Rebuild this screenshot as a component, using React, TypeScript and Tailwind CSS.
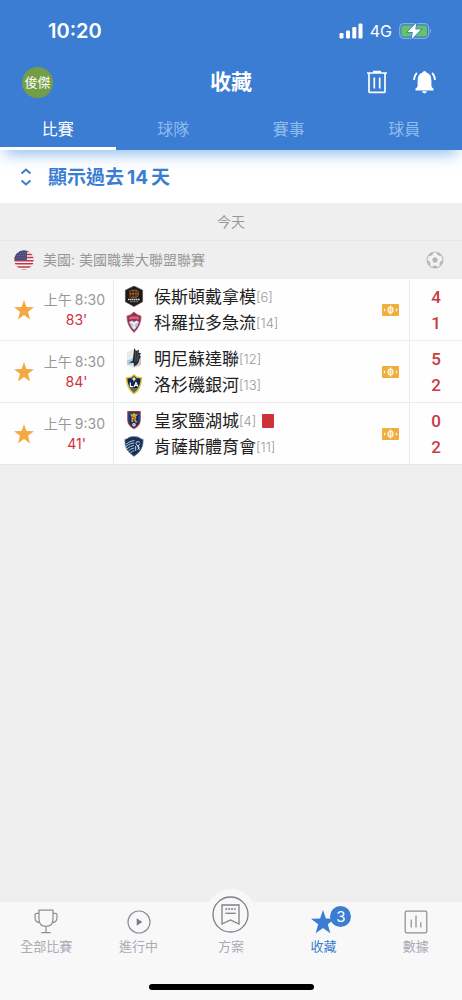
import type { ReactNode } from "react";

type Crest = "houston" | "colorado" | "minnesota" | "galaxy" | "saltlake" | "kansas";

interface Team {
  name: string;
  rank: number;
  crest: Crest;
  score: number;
  redCard?: boolean;
}

interface Match {
  time: string;
  minute: number;
  teams: Team[];
}

const matches: Match[] = [
  {
    time: "8:30",
    minute: 83,
    teams: [
      { name: "侯斯頓戴拿模", rank: 6, crest: "houston", score: 4 },
      { name: "科羅拉多急流", rank: 14, crest: "colorado", score: 1 },
    ],
  },
  {
    time: "8:30",
    minute: 84,
    teams: [
      { name: "明尼蘇達聯", rank: 12, crest: "minnesota", score: 5 },
      { name: "洛杉磯銀河", rank: 13, crest: "galaxy", score: 2 },
    ],
  },
  {
    time: "9:30",
    minute: 41,
    teams: [
      { name: "皇家鹽湖城", rank: 4, crest: "saltlake", score: 0, redCard: true },
      { name: "肯薩斯體育會", rank: 11, crest: "kansas", score: 2 },
    ],
  },
];

const crestArt: Record<Crest, ReactNode> = {
  houston: (
    <>
      <path d="M10 0 L18.6 4.2 V15.8 L10 20.5 L1.4 15.8 V4.2 Z" fill="#1c1b1c" stroke="#5b4037" strokeWidth=".6" />
      <path d="M6 4.3 V11.3 M6 7.8 H14 M9 4.3 V11.3 M7 4.3 H12.5 Q14.8 4.6 14.5 7.8 Q14.4 11 12 11.3 H7 M12 4.3 V11.3" fill="none" stroke="#b9642e" strokeWidth=".9" />
      <path d="M4 13.4 H16" stroke="#d8d4d1" strokeWidth="1.5" strokeDasharray="1.5 .4" />
      <path d="M6 15.7 H14" stroke="#a8a3a1" strokeWidth=".9" strokeDasharray="1 .4" />
    </>
  ),
  colorado: (
    <>
      <path d="M10 0 Q12.5 3 17 4 Q17.5 13 10 20.5 Q2.5 13 3 4 Q7.5 3 10 0 Z" fill="#9a2c48" stroke="#b65d78" strokeWidth=".8" />
      <path d="M5 5.2 Q10 3 15 5.2 V8 Q10 6 5 8 Z" fill="#c3516b" />
      <path d="M5 9.7 L8 8.6 L10 9.8 L12.4 8.4 L15.2 10 Q14.2 14.5 10 18.3 Q6 14.5 5 9.7 Z" fill="#a9c4dc" />
      <path d="M5.4 10.4 L8 9 L10 11 L12.4 8.8 L14.6 10.2 L12 11.8 L10 14 L8 11.6 Z" fill="#f0eef2" />
      <circle cx="10" cy="15.3" r="1.8" fill="#dfe8ef" />
      <path d="M5.7 5.9 H14.3" stroke="#e8b0bf" strokeWidth=".8" strokeDasharray="1 .5" />
    </>
  ),
  minnesota: (
    <>
      <path d="M3 4 L10 1 L17 4 V17 L10 20.5 L3 17 Z" fill="#e9eaeb" />
      <path d="M3.2 12 Q8 12 9 9 L10 13 L7.5 16.5 L3.2 17 Z" fill="#9cd0e7" />
      <path d="M13 13 L17 10.5 V16.8 L12 19 Z" fill="#c3c7ca" />
      <path d="M10.2 0 L12 3 L15 1.8 L14.7 5 L16.8 5 L15.7 8 L17 8.6 L15.2 12 Q14.6 16 11 18 L10 19 L9.6 15 L5 14.6 L8.7 12.8 Z" fill="#282c33" />
      <path d="M11.3 3 L11.8 14 M13.4 3 L13 13 M15 6 L13.5 13" stroke="#6f767d" strokeWidth=".4" />
    </>
  ),
  galaxy: (
    <>
      <path d="M10 0 L13 2.6 L18.4 3.2 Q17.8 15.5 10 20.5 Q2.2 15.5 1.6 3.2 L7 2.6 Z" fill="#e0c33f" />
      <path d="M10 1.6 L12.5 4 L16.7 4.5 Q16.1 14.3 10 18.7 Q3.9 14.3 3.3 4.5 L7.5 4 Z" fill="#10274d" />
      <path d="M10 1.8 L10.8 4.2 L12.6 5 L10.8 5.8 L10 8 L9.2 5.8 L7.4 5 L9.2 4.2 Z" fill="#fff2a6" />
      <path d="M6.3 8.5 V12.7 H9.3 M10.2 12.8 L12 8.6 L14 12.8 M10.8 11.5 H13.3" fill="none" stroke="#fff" strokeWidth="1.2" />
      <path d="M5.8 15 H14.2 M8 17 H12" stroke="#d0b33a" strokeWidth=".9" />
    </>
  ),
  saltlake: (
    <>
      <path d="M3.9 1.6 H16.1 V10 Q16.1 15.2 10 18.6 Q3.9 15.2 3.9 10 Z" fill="#152c5c" stroke="#9f3848" strokeWidth="1.2" />
      <path d="M5.1 3 V12 M14.9 3 V12" stroke="#1f4a87" strokeWidth="1.2" />
      <path d="M6.3 3 L8.3 4.5 L10 2.5 L12 4.5 L13.8 3 L13 6 H7 Z M7.5 6 V12.2 H9.2 V9 L11.5 12.4 H13.5 L11.4 9 Q13.5 7.3 11.4 6 Z" fill="#c9ac38" />
      <path d="M8 6.7 L11 8.4 L8.8 10" fill="none" stroke="#ae3045" strokeWidth=".9" />
      <circle cx="10" cy="14.7" r="1.8" fill="#e6e9f0" />
      <circle cx="10" cy="14.7" r=".6" fill="#59729e" />
    </>
  ),
  kansas: (
    <>
      <path d="M.8 3.4 Q3.5 2.8 5.2 1.2 Q10 -.6 14.8 1.2 Q16.5 2.8 19.2 3.4 Q20 14.5 10 20.5 Q0 14.5 .8 3.4 Z" fill="#182f57" stroke="#8aa3bd" strokeWidth=".7" />
      <path d="M2 8.2 Q5.5 5 10.4 4.5 M1.9 10.6 Q5.5 7.3 10.3 6.9 M2.7 13 Q6 9.8 10.2 9.4 M4.2 15.2 Q7 12.3 10.2 12 M6.2 17.1 Q8 15 10.2 14.6" fill="none" stroke="#a9c9e5" strokeWidth="1" />
      <path d="M15.8 6.2 Q11.8 4.7 12 7.6 Q12.3 9.2 14.3 10 Q16.5 12.2 13.5 13.3 M11.7 10 V14.8 M16.2 8 L13.7 10.4 L15.6 14" fill="none" stroke="#e8eef5" strokeWidth=".9" />
    </>
  ),
};

function StarIcon({ className }: { className: string }) {
  return (
    <svg viewBox="0 0 20 20" className={className} fill="currentColor" aria-hidden="true">
      <path d="M10 0 L12.4 7 L20 7.2 L14 11.8 L16.1 19.4 L10 15 L3.9 19.4 L6 11.8 L0 7.2 L7.6 7 Z" />
    </svg>
  );
}

function StatusBar() {
  return (
    <div className="flex h-[62px] items-center justify-between pr-[30px] pl-12">
      <span className="text-[20px] font-semibold">10:20</span>
      <div className="flex items-center gap-[7px]">
        <svg className="h-4 w-6" viewBox="0 0 24 16" fill="#fff" aria-hidden="true">
          <rect x="0.5" y="10" width="4" height="5.5" rx="1.2" />
          <rect x="7" y="7.5" width="4" height="8" rx="1.2" />
          <rect x="13.3" y="4" width="4" height="11.5" rx="1.2" />
          <rect x="19.5" y="0.5" width="4" height="15" rx="1.2" />
        </svg>
        <span className="text-[16px]">4G</span>
        <svg className="h-4 w-[33px]" viewBox="0 0 33 16" aria-hidden="true">
          <rect x=".7" y=".7" width="29" height="14.6" rx="4.2" fill="none" stroke="#86aee3" strokeWidth="1.2" />
          <rect x="2.4" y="2.4" width="25.6" height="11.2" rx="2.6" fill="#64c466" />
          <path d="M31 5.5 Q33 8 31 10.5 Z" fill="#86aee3" />
          <path d="M17.3 0 L8.5 9 H13.8 L12.7 16 L22 6.6 H16.3 Z" fill="#fff" stroke="#3a7dd2" strokeWidth="1.6" paintOrder="stroke" />
        </svg>
      </div>
    </div>
  );
}

function Header() {
  const tabs = ["比賽", "球隊", "賽事", "球員"];
  return (
    <header className="relative z-10 bg-[#3a7dd2] text-white shadow-[0_9px_14px_-5px_rgba(70,145,225,0.6)]">
      <StatusBar />
      <div className="grid h-10 grid-cols-[1fr_auto_1fr] items-center px-[22px]">
        <button className="size-[31px] rounded-full bg-[#739e47] text-[13px] leading-none">俊傑</button>
        <h1 className="text-[21px] leading-8 font-bold">收藏</h1>
        <div className="flex items-center gap-[25px] justify-self-end pr-1">
          <button aria-label="刪除">
            <svg className="h-6 w-[22px]" viewBox="0 0 22 24" fill="none" stroke="#fff" strokeWidth="1.7" aria-hidden="true">
              <path d="M1 3 H21 M7 1.7 H15 M3 3 V21.4 Q3 22.4 4 22.4 H18 Q19 22.4 19 21.4 V3 M8.3 7.5 V18.5 M13.7 7.5 V18.5" />
            </svg>
          </button>
          <button aria-label="通知">
            <svg className="h-6 w-[23px]" viewBox="0 0 23 24" aria-hidden="true">
              <path d="M11.5 1 Q13.2 1 13.4 2.6 Q18.4 4.2 18.4 10.3 V16 Q18.6 17.8 20.5 18.6 V20.4 H2.5 V18.6 Q4.4 17.8 4.6 16 V10.3 Q4.6 4.2 9.6 2.6 Q9.8 1 11.5 1 Z M9 21.3 H14 Q13.5 23.4 11.5 23.4 Q9.5 23.4 9 21.3 Z" fill="#fff" />
              <path d="M4 3 Q1.2 5.3 1 10 M19 3 Q21.8 5.3 22 10" fill="none" stroke="#fff" strokeWidth="1.7" />
            </svg>
          </button>
        </div>
      </div>
      <nav className="grid grid-cols-4">
        {tabs.map((tab, i) => (
          <button
            key={tab}
            className={
              i === 0
                ? "h-12 border-b-[3px] border-white pt-2 text-[16px]"
                : "h-12 border-b-[3px] border-transparent pt-2 text-[16px] text-[#8fbcf0]"
            }
          >
            {tab}
          </button>
        ))}
      </nav>
    </header>
  );
}

function MoneyIcon() {
  return (
    <svg className="h-3 w-[17px]" viewBox="0 0 17 12" aria-label="投注">
      <rect width="17" height="12" rx="1" fill="#f1ad3f" />
      <g fill="none" stroke="#fff6df">
        <ellipse cx="8.5" cy="6" rx="2.5" ry="2.8" strokeWidth="1.3" />
        <path d="M8.5 1.3 V10.7" strokeWidth="1.2" />
        <path d="M7 5.2 H10 M7 6.8 H10" strokeWidth=".5" />
        <path d="M2.5 4.8 V7.2 M14.5 4.8 V7.2" strokeWidth="1.3" />
      </g>
    </svg>
  );
}

function MatchRow({ match }: { match: Match }) {
  return (
    <li className="flex h-[62px] border-t border-[#ececec] bg-[#fefefe]">
      <button className="flex w-11 shrink-0 items-center justify-end pr-[10px] text-[#f3aa43]" aria-label="取消收藏">
        <StarIcon className="size-5" />
      </button>
      <div className="flex w-[70px] shrink-0 flex-col items-end justify-center border-r border-[#ececec] pr-2 leading-5">
        <div className="flex items-baseline gap-[3px] whitespace-nowrap text-[14px] text-[#989898]">
          <span>上午</span>
          <span>{match.time}</span>
        </div>
        <div className="w-[61px] pl-1 text-center text-[14px] text-[#d22f3b]">{match.minute}'</div>
      </div>
      <div className="flex min-w-0 flex-1 flex-col justify-center pl-[10px]">
        {match.teams.map((team) => (
          <div key={team.name} className="flex h-[26px] items-center whitespace-nowrap">
            <svg className="mr-[10px] h-[21px] w-5 shrink-0" viewBox="0 0 20 21" aria-hidden="true">
              {crestArt[team.crest]}
            </svg>
            <span className="text-[17px] leading-6 text-[#202020]">{team.name}</span>
            <span className="text-[13px] leading-5 font-light text-[#999]">[{team.rank}]</span>
            {team.redCard && <span className="ml-[6px] h-[14px] w-3 rounded-[1px] bg-[#cc3237]" role="img" aria-label="紅牌" />}
          </div>
        ))}
      </div>
      <div className="flex w-[27px] shrink-0 items-center">
        <MoneyIcon />
      </div>
      <div className="flex w-[53px] shrink-0 flex-col items-center justify-center border-l border-[#ececec] font-[Roboto] text-[17px] font-medium text-[#c93a41]">
        {match.teams.map((team) => (
          <span key={team.name} className="h-[26px] leading-[26px]">{team.score}</span>
        ))}
      </div>
    </li>
  );
}

function UsFlag() {
  return (
    <svg className="size-5" viewBox="0 0 20 20" aria-hidden="true">
      <defs>
        <clipPath id="flag-round">
          <circle cx="10" cy="10" r="9.7" />
        </clipPath>
      </defs>
      <g clipPath="url(#flag-round)">
        <rect width="20" height="20" fill="#f3f1f2" />
        <path d="M0 1.4 H20 M0 4.5 H20 M0 7.6 H20 M0 10.7 H20 M0 13.8 H20 M0 16.9 H20 M0 20 H20" stroke="#bd3846" strokeWidth="1.5" />
        <rect width="13" height="10" fill="#4b4b7d" />
        <path d="M2 3 H13 M1 5.5 H13 M2 8 H13" stroke="#7b7ba3" strokeWidth=".7" strokeDasharray="1 1" />
      </g>
    </svg>
  );
}

function BallIcon() {
  return (
    <svg className="size-[18px]" viewBox="0 0 18 18" aria-hidden="true">
      <circle cx="9" cy="9" r="8" fill="#f3f3f3" stroke="#bdbdbd" strokeWidth="1.1" />
      <path d="M9 6 L11.9 8 L10.9 11.4 H7.1 L6.1 8 Z M5 1.8 L7.5 1.5 L6.8 3.6 L4 5.2 L2.8 4.4 Z M13 1.8 L10.5 1.5 L11.2 3.6 L14 5.2 L15.2 4.4 Z M1 9.5 L2.8 9.8 L4.6 12.3 L4.3 14.8 Q1.5 13 1 9.5 Z M17 9.5 L15.2 9.8 L13.4 12.3 L13.7 14.8 Q16.5 13 17 9.5 Z M6.7 14.8 H11.3 L11.2 17 H6.8 Z" fill="#b5b5b5" />
    </svg>
  );
}

const navItems: { label: string; icon: ReactNode; active?: boolean }[] = [
  {
    label: "全部比賽",
    icon: (
      <svg className="h-[25px] w-6" viewBox="0 0 24 25" fill="none" stroke="#8b8e95" strokeWidth="1.2" aria-hidden="true">
        <path d="M5 1.2 H19 V10 Q19 17.3 12 17.3 Q5 17.3 5 10 Z M12 17.5 V23.5 M7.3 23.6 H16.7 M5 4.3 H2.8 Q1 4.3 1 6 V8.5 Q1 13 5.4 13.7 M19 4.3 H21.2 Q23 4.3 23 6 V8.5 Q23 13 18.6 13.7" />
      </svg>
    ),
  },
  {
    label: "進行中",
    icon: (
      <svg className="size-6" viewBox="0 0 24 24" aria-hidden="true">
        <circle cx="12" cy="12" r="11" fill="none" stroke="#8b8e95" strokeWidth="1.2" />
        <path d="M9.7 8.2 L15.3 12 L9.7 15.8 Z" fill="#7b7e85" />
      </svg>
    ),
  },
  {
    label: "方案",
    icon: (
      <span className="absolute bottom-[-5px] left-1/2 flex size-[50px] -translate-x-1/2 items-center justify-center rounded-full bg-[#f8f8f8]">
        <svg className="size-[37px]" viewBox="0 0 37 37" fill="none" stroke="#7d8087" strokeWidth="1.3" aria-hidden="true">
          <circle cx="18.5" cy="18.5" r="17.5" />
          <path d="M10 9 H27 V28 L18.5 24 L10 28 Z" />
          <path d="M13.3 13 H23.7" strokeDasharray="2 .9" />
          <path d="M13.3 17.3 H23.7" />
        </svg>
      </span>
    ),
  },
  {
    label: "收藏",
    active: true,
    icon: (
      <>
        <StarIcon className="size-6" />
        <span className="absolute -top-[3px] left-[19px] flex h-[21px] w-[21px] items-center justify-center rounded-full bg-[#3a7dd2] text-[15px] leading-none text-white">
          3
        </span>
      </>
    ),
  },
  {
    label: "數據",
    icon: (
      <svg className="size-6" viewBox="0 0 24 24" fill="none" stroke="#8b8e95" strokeWidth="1.2" aria-hidden="true">
        <rect x="1.2" y="1.2" width="21.6" height="21.6" rx="1.2" />
        <path d="M7.2 9.5 V17.5 M12 5.5 V17.5 M16.8 12.3 V17.5" />
      </svg>
    ),
  },
];

export default function App() {
  return (
    <div className="flex min-h-screen flex-col bg-[#efefef] font-[Inter,'Noto_Sans_CJK_TC',sans-serif]" lang="zh-Hant">
      <Header />
      <main className="flex-1">
        <button className="flex h-[53px] w-full items-center gap-4 bg-white px-5 text-[#3a7dd2]">
          <svg className="h-[18px] w-3" viewBox="0 0 12 18" fill="none" stroke="currentColor" strokeWidth="2" aria-hidden="true">
            <path d="M1.5 5.5 L6 1.5 L10.5 5.5 M1.5 12.5 L6 16.5 L10.5 12.5" />
          </svg>
          <span className="flex items-baseline gap-[3px] pt-1 text-[19px] font-bold">
            <span>顯示過去</span>
            <span>14</span>
            <span>天</span>
          </span>
        </button>
        <h2 className="flex h-[37px] items-center justify-center text-[14px] text-[#989898]">今天</h2>
        <section>
          <div className="flex h-[38px] items-center border-t border-[#e7e7e7] pr-[18px] pl-[14px]">
            <UsFlag />
            <h3 className="ml-[9px] flex-1 text-[14px] text-[#989898]">美國: 美國職業大聯盟聯賽</h3>
            <BallIcon />
          </div>
          <ul className="border-b border-[#e7e7e7]">
            {matches.map((match) => (
              <MatchRow key={match.teams[0].name} match={match} />
            ))}
          </ul>
        </section>
      </main>
      <footer className="bg-[#f8f8f8]">
        <nav className="grid h-[78px] grid-cols-5 pt-[7px]">
          {navItems.map((item) => (
            <a
              key={item.label}
              href="#"
              className={
                item.active
                  ? "flex flex-col items-center text-[13px] text-[#3a7dd2]"
                  : "flex flex-col items-center text-[13px] text-[#a9abb5]"
              }
            >
              <span className="relative flex h-[25px] min-w-6 items-center justify-center">{item.icon}</span>
              <span className="relative mt-[2px] leading-5">{item.label}</span>
            </a>
          ))}
        </nav>
        <div className="flex h-5 justify-center pt-1">
          <div className="h-[6px] w-[165px] rounded-full bg-black" />
        </div>
      </footer>
    </div>
  );
}
